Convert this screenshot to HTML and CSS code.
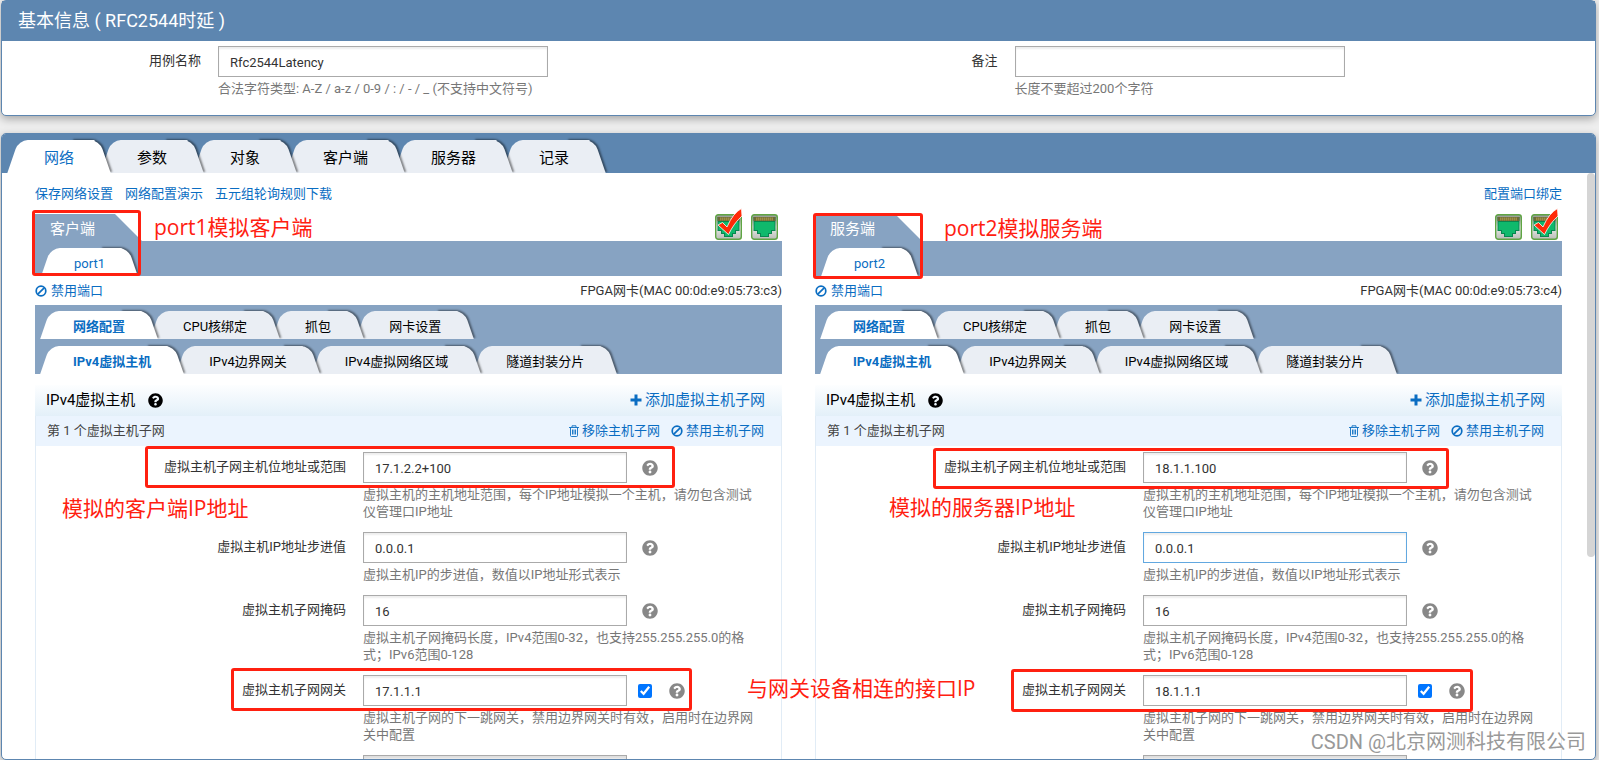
FILE: index.html
```html
<!DOCTYPE html>
<html lang="zh-CN">
<head>
<meta charset="utf-8">
<title>RFC2544时延</title>
<link rel="stylesheet" href="styles.css">
</head>
<body>
<svg class="sprite" aria-hidden="true">
  <defs>
    <linearGradient id="metal" x1="0" y1="0" x2="0" y2="1">
      <stop offset="0" stop-color="#8d948c"/>
      <stop offset="0.5" stop-color="#e9ece8"/>
      <stop offset="1" stop-color="#b9bcb8"/>
    </linearGradient>
    <symbol id="help" viewBox="0 0 512 512">
      <path d="M504 256c0 136.997-111.043 248-248 248S8 392.997 8 256C8 119.083 119.043 8 256 8s248 111.083 248 248zM262.655 90c-54.497 0-89.255 22.957-116.549 63.758-3.536 5.286-2.353 12.415 2.715 16.258l34.699 26.31c5.205 3.947 12.621 3.008 16.665-2.122 17.864-22.658 30.113-35.797 57.303-35.797 20.429 0 45.698 13.148 45.698 32.958 0 14.976-12.363 22.667-32.534 33.976C247.128 238.528 216 254.941 216 296v4c0 6.627 5.373 12 12 12h56c6.627 0 12-5.373 12-12v-1.333c0-28.462 83.186-29.647 83.186-106.667 0-58.002-60.165-102-116.531-102zM256 338c-25.365 0-46 20.635-46 46 0 25.364 20.635 46 46 46s46-20.636 46-46c0-25.365-20.635-46-46-46z"/>
    </symbol>
    <symbol id="ban" viewBox="0 0 12 12">
      <circle cx="6" cy="6" r="4.8" fill="none" stroke="currentColor" stroke-width="1.7"/>
      <path d="M2.8 9.2 9.2 2.8" stroke="currentColor" stroke-width="1.7"/>
    </symbol>
    <symbol id="trash" viewBox="0 0 10 12">
      <path d="M0 2.5h10M3 2.3V.8h4v1.5M1.5 2.5v8q0 1 1 1h5q1 0 1-1v-8M3.5 4.5v5M5 4.5v5M6.500 4.500v5" fill="none" stroke="currentColor" stroke-width="0.9"/>
    </symbol>
    <symbol id="plus" viewBox="0 0 12 12">
      <path d="M4.500.500h3v4h4v3h-4v4h-3v-4h-4v-3h4z"/>
    </symbol>
    <symbol id="jack" viewBox="0 0 27 26">
      <rect x=".7" y=".7" width="25.600" height="24.600" rx="2.500" fill="url(#metal)" stroke="#5fa544" stroke-width="1.400"/>
      <path d="M2.500 3h22v14h-3.500v3h-3v3h-9v-3h-3v-3h-3.500z" fill="#0a8550"/>
      <path d="M2.500 3h22v4h-22z" fill="#6b6a38"/>
      <path d="M5 5h17" stroke="#a08f45" stroke-width="3" stroke-dasharray="1.500 .5"/>
      <path d="M3.500 8h20v8h-3.500v3h-3v3h-7v-3h-3v-3h-3.500z" fill="#10b96c"/>
    </symbol>
    <symbol id="tick" viewBox="0 0 27 32">
      <path d="M3 17 7.500 14.500 12 19Q18 5 26.500.500L27 8Q19 15 13.500 26.500z" fill="#ff2a08" stroke="#fff" stroke-width=".8"/>
    </symbol>
  </defs>
</svg>

<section class="panel">
  <h1 class="panel-title">基本信息 ( RFC2544时延 )</h1>
  <form class="basic">
    <div class="basic-field">
      <label for="case-name">用例名称</label>
      <div>
        <input class="text" id="case-name" type="text" value="Rfc2544Latency">
        <p class="hint">合法字符类型: A-Z / a-z / 0-9 / : / - / _ (不支持中文符号)</p>
      </div>
    </div>
    <div class="basic-field">
      <label for="case-note">备注</label>
      <div>
        <input class="text" id="case-note" type="text">
        <p class="hint">长度不要超过200个字符</p>
      </div>
    </div>
  </form>
</section>

<main class="panel panel-main">
  <nav class="main-nav">
    <ul class="tabs tabs-large">
      <li class="tab active"><button type="button">网络</button></li>
      <li class="tab"><button type="button">参数</button></li>
      <li class="tab"><button type="button">对象</button></li>
      <li class="tab"><button type="button">客户端</button></li>
      <li class="tab"><button type="button">服务器</button></li>
      <li class="tab"><button type="button">记录</button></li>
    </ul>
  </nav>
  <div class="content">
    <div class="toolbar">
      <a href="#">保存网络设置</a>
      <a href="#">网络配置演示</a>
      <a href="#">五元组轮询规则下载</a>
      <a class="push" href="#">配置端口绑定</a>
    </div>
    <div class="columns">
      <section class="column">
        <header class="port-head">
          <h2 class="port-title">客户端</h2>
          <div class="jacks">
            <button type="button" class="jack" aria-label="端口1"><svg><use href="#jack"/></svg><svg class="tick"><use href="#tick"/></svg></button>
            <button type="button" class="jack" aria-label="端口2"><svg><use href="#jack"/></svg></button>
          </div>
        </header>
        <div class="port-bar">
          <ul class="tabs"><li class="tab active"><button type="button">port1</button></li></ul>
        </div>
        <div class="port-info">
          <a href="#"><svg class="icon-s"><use href="#ban"/></svg>禁用端口</a>
          <span>FPGA网卡(MAC 00:0d:e9:05:73:c3)</span>
        </div>
        <nav class="sub-nav">
          <ul class="tabs">
            <li class="tab active strong"><button type="button">网络配置</button></li>
            <li class="tab"><button type="button">CPU核绑定</button></li>
            <li class="tab"><button type="button">抓包</button></li>
            <li class="tab"><button type="button">网卡设置</button></li>
          </ul>
          <ul class="tabs">
            <li class="tab active strong"><button type="button">IPv4虚拟主机</button></li>
            <li class="tab"><button type="button">IPv4边界网关</button></li>
            <li class="tab"><button type="button">IPv4虚拟网络区域</button></li>
            <li class="tab"><button type="button">隧道封装分片</button></li>
          </ul>
        </nav>
        <div class="section-head">
          <h3>IPv4虚拟主机</h3>
          <svg class="icon-m"><use href="#help"/></svg>
          <a class="push" href="#"><svg class="icon-s"><use href="#plus"/></svg>添加虚拟主机子网</a>
        </div>
        <div class="subnet">
          <div class="subnet-head">
            <span>第 1 个虚拟主机子网</span>
            <a class="push" href="#"><svg class="icon-t"><use href="#trash"/></svg>移除主机子网</a>
            <a href="#"><svg class="icon-s"><use href="#ban"/></svg>禁用主机子网</a>
          </div>
          <form class="subnet-form">
            <div class="field">
              <label for="c-range">虚拟主机子网主机位地址或范围</label>
              <div class="control"><input class="text" id="c-range" type="text" value="17.1.2.2+100"><svg class="icon-q"><use href="#help"/></svg></div>
              <p class="hint">虚拟主机的主机地址范围，每个IP地址模拟一个主机，请勿包含测试仪管理口IP地址</p>
            </div>
            <div class="field">
              <label for="c-step">虚拟主机IP地址步进值</label>
              <div class="control"><input class="text" id="c-step" type="text" value="0.0.0.1"><svg class="icon-q"><use href="#help"/></svg></div>
              <p class="hint">虚拟主机IP的步进值，数值以IP地址形式表示</p>
            </div>
            <div class="field">
              <label for="c-mask">虚拟主机子网掩码</label>
              <div class="control"><input class="text" id="c-mask" type="text" value="16"><svg class="icon-q"><use href="#help"/></svg></div>
              <p class="hint">虚拟主机子网掩码长度，IPv4范围0-32，也支持255.255.255.0的格式；IPv6范围0-128</p>
            </div>
            <div class="field">
              <label for="c-gw">虚拟主机子网网关</label>
              <div class="control"><input class="text" id="c-gw" type="text" value="17.1.1.1"><input class="check" type="checkbox" checked aria-label="启用网关"><svg class="icon-q"><use href="#help"/></svg></div>
              <p class="hint">虚拟主机子网的下一跳网关，禁用边界网关时有效，启用时在边界网关中配置</p>
            </div>
            <div class="field">
              <span></span>
              <div class="control"><input class="text" type="text" disabled></div>
            </div>
          </form>
        </div>
      </section>

      <section class="column">
        <header class="port-head">
          <h2 class="port-title">服务端</h2>
          <div class="jacks">
            <button type="button" class="jack" aria-label="端口1"><svg><use href="#jack"/></svg></button>
            <button type="button" class="jack" aria-label="端口2"><svg><use href="#jack"/></svg><svg class="tick"><use href="#tick"/></svg></button>
          </div>
        </header>
        <div class="port-bar">
          <ul class="tabs"><li class="tab active"><button type="button">port2</button></li></ul>
        </div>
        <div class="port-info">
          <a href="#"><svg class="icon-s"><use href="#ban"/></svg>禁用端口</a>
          <span>FPGA网卡(MAC 00:0d:e9:05:73:c4)</span>
        </div>
        <nav class="sub-nav">
          <ul class="tabs">
            <li class="tab active strong"><button type="button">网络配置</button></li>
            <li class="tab"><button type="button">CPU核绑定</button></li>
            <li class="tab"><button type="button">抓包</button></li>
            <li class="tab"><button type="button">网卡设置</button></li>
          </ul>
          <ul class="tabs">
            <li class="tab active strong"><button type="button">IPv4虚拟主机</button></li>
            <li class="tab"><button type="button">IPv4边界网关</button></li>
            <li class="tab"><button type="button">IPv4虚拟网络区域</button></li>
            <li class="tab"><button type="button">隧道封装分片</button></li>
          </ul>
        </nav>
        <div class="section-head">
          <h3>IPv4虚拟主机</h3>
          <svg class="icon-m"><use href="#help"/></svg>
          <a class="push" href="#"><svg class="icon-s"><use href="#plus"/></svg>添加虚拟主机子网</a>
        </div>
        <div class="subnet">
          <div class="subnet-head">
            <span>第 1 个虚拟主机子网</span>
            <a class="push" href="#"><svg class="icon-t"><use href="#trash"/></svg>移除主机子网</a>
            <a href="#"><svg class="icon-s"><use href="#ban"/></svg>禁用主机子网</a>
          </div>
          <form class="subnet-form">
            <div class="field">
              <label for="s-range">虚拟主机子网主机位地址或范围</label>
              <div class="control"><input class="text" id="s-range" type="text" value="18.1.1.100"><svg class="icon-q"><use href="#help"/></svg></div>
              <p class="hint">虚拟主机的主机地址范围，每个IP地址模拟一个主机，请勿包含测试仪管理口IP地址</p>
            </div>
            <div class="field">
              <label for="s-step">虚拟主机IP地址步进值</label>
              <div class="control"><input class="text current" id="s-step" type="text" value="0.0.0.1"><svg class="icon-q"><use href="#help"/></svg></div>
              <p class="hint">虚拟主机IP的步进值，数值以IP地址形式表示</p>
            </div>
            <div class="field">
              <label for="s-mask">虚拟主机子网掩码</label>
              <div class="control"><input class="text" id="s-mask" type="text" value="16"><svg class="icon-q"><use href="#help"/></svg></div>
              <p class="hint">虚拟主机子网掩码长度，IPv4范围0-32，也支持255.255.255.0的格式；IPv6范围0-128</p>
            </div>
            <div class="field">
              <label for="s-gw">虚拟主机子网网关</label>
              <div class="control"><input class="text" id="s-gw" type="text" value="18.1.1.1"><input class="check" type="checkbox" checked aria-label="启用网关"><svg class="icon-q"><use href="#help"/></svg></div>
              <p class="hint">虚拟主机子网的下一跳网关，禁用边界网关时有效，启用时在边界网关中配置</p>
            </div>
            <div class="field">
              <span></span>
              <div class="control"><input class="text" type="text" disabled></div>
            </div>
          </form>
        </div>
      </section>
    </div>
    <div class="scroll-thumb"></div>
  </div>
</main>

<div class="notes">
  <div class="mark mark-client"></div>
  <div class="mark mark-server"></div>
  <div class="mark mark-client-ip"></div>
  <div class="mark mark-server-ip"></div>
  <div class="mark mark-client-gw"></div>
  <div class="mark mark-server-gw"></div>
  <p class="note note-client">port1模拟客户端</p>
  <p class="note note-server">port2模拟服务端</p>
  <p class="note note-client-ip">模拟的客户端IP地址</p>
  <p class="note note-server-ip">模拟的服务器IP地址</p>
  <p class="note note-gw">与网关设备相连的接口IP</p>
  <p class="watermark">CSDN @北京网测科技有限公司</p>
</div>
</body>
</html>
```

FILE: styles.css
```css
* {
  box-sizing: border-box;
}

body {
  position: relative;
  display: flex;
  flex-direction: column;
  height: 100vh;
  margin: 0;
  padding: 0 3px 0 1px;
  overflow: hidden;
  background: #eee;
  color: #333;
  font: 13px/17px Roboto, "Noto Sans CJK SC", sans-serif;
}

h1, h2, h3, p, ul {
  margin: 0;
  padding: 0;
  font-weight: 400;
}

ul {
  list-style: none;
}

a {
  color: #0a6dc2;
  text-decoration: none;
}

button {
  padding: 0;
  border: 0;
  background: none;
  font: inherit;
  color: inherit;
}

svg {
  fill: currentColor;
  flex: none;
}

.sprite {
  position: absolute;
  width: 0;
  height: 0;
}

.push {
  margin-left: auto;
}

/* Panels */
.panel {
  margin-bottom: 17px;
  border: 1px solid #5d86b0;
  border-radius: 5px;
  background: #fff;
  box-shadow: 0 3px 8px rgba(0, 0, 0, 0.3);
}

.panel-title {
  padding: 0 16px;
  background: #5d86b0;
  color: #fff;
  font-size: 18px;
  line-height: 40px;
}

.panel-main {
  display: flex;
  flex: 1;
  flex-direction: column;
  min-height: 0;
  margin-bottom: 0;
  overflow: hidden;
}

.basic {
  display: grid;
  grid-template-columns: 1fr 1fr;
  padding: 5px 0 18px;
}

.basic-field {
  display: grid;
  grid-template-columns: 199px 330px;
  gap: 17px;
}

.basic-field label,
.field label {
  line-height: 29px;
  text-align: right;
}

.text {
  display: block;
  width: 100%;
  height: 31px;
  padding: 1px 11px 0;
  border: 1px solid #aaa;
  background: #fff;
  box-shadow: inset 0 2px 2px rgba(0, 0, 0, 0.07);
  color: #333;
  font: inherit;
}

.text.current {
  border-color: #62a8e0;
}

.text:disabled {
  background: #eee;
}

.hint {
  margin-top: 3px;
  color: #777;
}

/* Tabs */
.main-nav {
  padding: 6px 11px 0;
  background: #5d86b0;
}

.tabs {
  display: flex;
  gap: 2px;
}

.tabs-large {
  gap: 1px;
}

.tab {
  --fill: #eaeef4;
  position: relative;
  height: 28px;
  padding: 2px 28px 0;
  clip-path: inset(-4px -16px 0 -16px);
  color: #000;
  line-height: 27px;
}

.tabs-large .tab {
  height: 33px;
  padding: 2px 31px 0;
  font-size: 15px;
  line-height: 32px;
}

.tab.active {
  --fill: #fff;
  color: #0a6dc2;
}

.tab.strong {
  font-weight: 700;
}

.tab:nth-child(1) { z-index: 6; }
.tab:nth-child(2) { z-index: 5; }
.tab:nth-child(3) { z-index: 4; }
.tab:nth-child(4) { z-index: 3; }
.tab:nth-child(5) { z-index: 2; }
.tab:nth-child(6) { z-index: 1; }

.tab::before,
.tab::after {
  content: "";
  position: absolute;
  top: 0;
  bottom: 0;
  background: var(--fill);
}

.tab::before {
  left: 0;
  right: 16px;
  z-index: -1;
  border-radius: 9px 0 0 0;
  transform: skewX(-19deg);
}

.tab::after {
  right: 0;
  width: 28px;
  z-index: -2;
  border-radius: 0 9px 0 0;
  box-shadow: 2px -1px 2px rgba(0, 0, 0, 0.45);
  transform: skewX(19deg);
}

/* Network page */
.content {
  position: relative;
  flex: 1;
  min-height: 0;
  padding: 0 33px;
  overflow: hidden;
}

.toolbar {
  display: flex;
  gap: 12px;
  padding: 12px 0 11px;
  line-height: 18px;
}

.columns {
  display: grid;
  grid-template-columns: 1fr 1fr;
  gap: 33px;
}

.port-head {
  display: flex;
  justify-content: space-between;
}

.port-title {
  padding: 3px 47px 0 15px;
  background: #87a3c2;
  clip-path: polygon(0 0, calc(100% - 27px) 0, 100% 100%, 0 100%);
  color: #fff;
  font-size: 15px;
  line-height: 24px;
}

.jacks {
  display: flex;
  gap: 9px;
  padding-right: 4px;
}

.jack {
  position: relative;
  width: 27px;
  height: 26px;
}

.jack svg {
  display: block;
  width: 27px;
  height: 26px;
}

.jack .tick {
  position: absolute;
  left: 0;
  bottom: 0;
  height: 32px;
}

.port-bar {
  padding: 7px 11px 0;
  background: #87a3c2;
}

.port-info {
  display: flex;
  justify-content: space-between;
  line-height: 29px;
}

.port-info a {
  display: flex;
  align-items: center;
  gap: 4px;
}

.sub-nav {
  display: grid;
  gap: 7px;
  padding: 6px 10px 0;
  background: #87a3c2;
}

.icon-s {
  width: 12px;
  height: 12px;
}

.icon-t {
  width: 10px;
  height: 12px;
}

.icon-m {
  width: 15px;
  height: 15px;
}

.icon-q {
  width: 16px;
  height: 16px;
  margin-left: 15px;
  color: #888;
}

.section-head {
  display: flex;
  align-items: center;
  gap: 13px;
  margin-top: 11px;
  padding: 0 17px 1px 11px;
  background: linear-gradient(#fdfeff, #e3f0f9);
  color: #000;
  font-size: 15px;
  line-height: 30px;
}

.section-head h3 {
  font-size: 15px;
}

.section-head a,
.subnet-head a {
  display: flex;
  align-items: center;
  gap: 3px;
}

.subnet {
  border: 1px solid #e1ecf6;
  border-width: 0 1px;
}

.subnet-head {
  display: flex;
  gap: 11px;
  padding: 0 17px 0 11px;
  background: #ebf4fe;
  color: #444;
  line-height: 30px;
}

.subnet-head .push {
  margin-left: auto;
}

.subnet-form {
  display: grid;
  gap: 12px;
  padding-top: 6px;
}

.field {
  display: grid;
  grid-template-columns: 310px 398px;
  column-gap: 17px;
}

.field .hint {
  grid-column: 2;
}

.control {
  display: flex;
  align-items: center;
}

.control .text {
  width: 264px;
}

.check {
  width: 14px;
  height: 14px;
  margin: 0 2px 0 11px;
}

.scroll-thumb {
  position: absolute;
  top: 0;
  right: 0;
  width: 8px;
  height: 384px;
  border-radius: 4px;
  background: #d5d5d5;
}

/* Annotations over the page */
.notes {
  position: absolute;
  inset: 0;
  z-index: 10;
  pointer-events: none;
}

.mark {
  position: absolute;
  border: 3px solid #ff2010;
  border-radius: 3px;
}

.mark-client { left: 32px; top: 210px; width: 109px; height: 66px; }
.mark-server { left: 813px; top: 213px; width: 110px; height: 66px; }
.mark-client-ip { left: 145px; top: 446px; width: 530px; height: 42px; }
.mark-server-ip { left: 933px; top: 448px; width: 516px; height: 41px; }
.mark-client-gw { left: 231px; top: 668px; width: 461px; height: 43px; }
.mark-server-gw { left: 1011px; top: 669px; width: 462px; height: 43px; }

.note {
  position: absolute;
  color: #ff2010;
  font: 21px/30px "Open Sans", "Noto Sans CJK SC", sans-serif;
  white-space: nowrap;
}

.note-client { left: 154px; top: 212px; }
.note-server { left: 944px; top: 213px; }
.note-client-ip { left: 62px; top: 493px; }
.note-server-ip { left: 889px; top: 492px; }
.note-gw { left: 747px; top: 673px; }

.watermark {
  position: absolute;
  right: 13px;
  bottom: 3px;
  color: #999;
  font-size: 20px;
  line-height: 30px;
  text-shadow: 1px 1px 0 #fff;
  white-space: nowrap;
}
```
